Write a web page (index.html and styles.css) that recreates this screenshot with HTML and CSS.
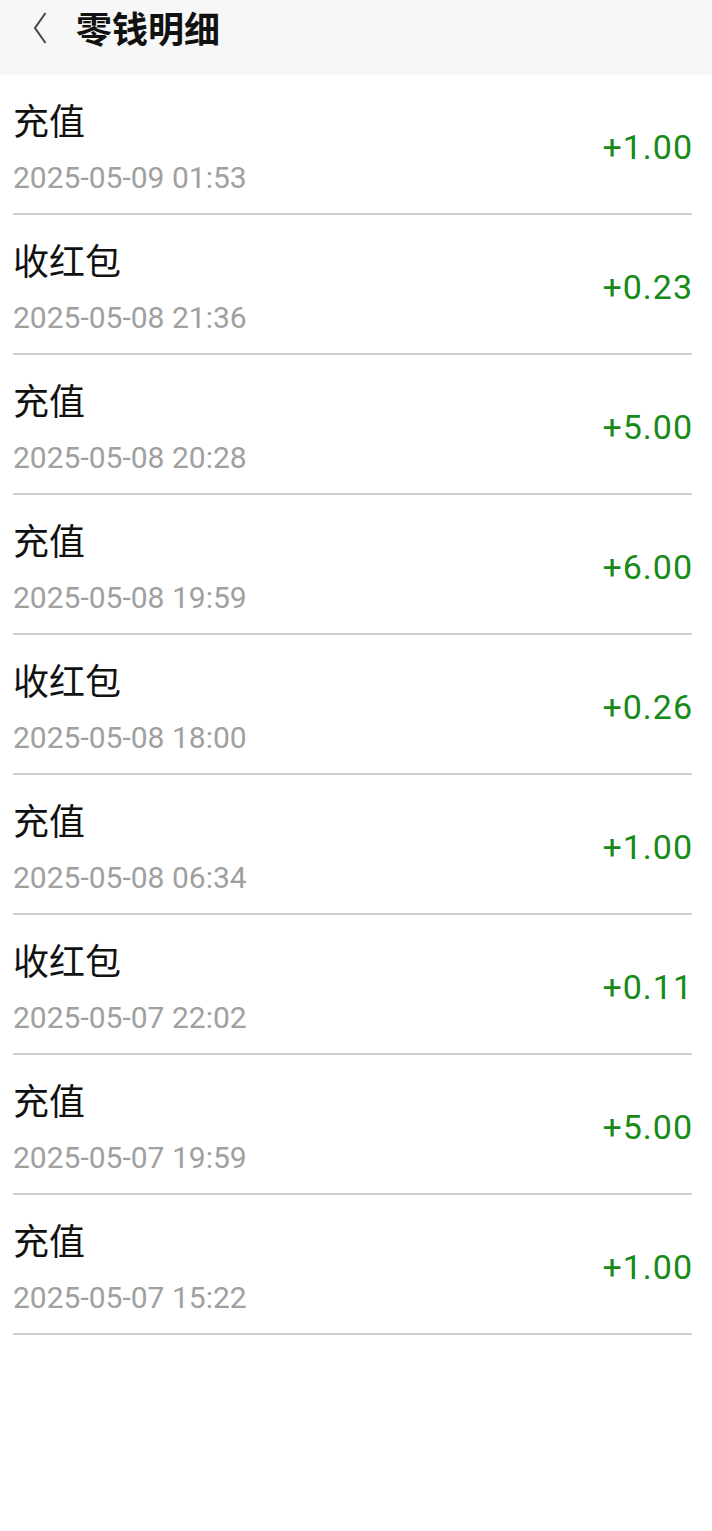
FILE: index.html
```html
<!DOCTYPE html>
<html>
<head>
	<meta charset="utf-8">
	<title>零钱明细</title>
	<link rel="stylesheet" href="styles.css">
</head>
<body>
	<div class="header">
		<div class="back">
			<svg width="14" height="32" viewBox="0 0 14 32">
				<polyline points="12.5,1 2,16 12.5,31" fill="none" stroke="#444" stroke-width="2"/>
			</svg>
		</div>
		<div class="title">零钱明细</div>
	</div>

	<div class="list">
		<div class="item">
			<div class="info">
				<div class="name">充值</div>
				<div class="time">2025-05-09 01:53</div>
			</div>
			<div class="amount">+1.00</div>
		</div>
		<div class="item">
			<div class="info">
				<div class="name">收红包</div>
				<div class="time">2025-05-08 21:36</div>
			</div>
			<div class="amount">+0.23</div>
		</div>
		<div class="item">
			<div class="info">
				<div class="name">充值</div>
				<div class="time">2025-05-08 20:28</div>
			</div>
			<div class="amount">+5.00</div>
		</div>
		<div class="item">
			<div class="info">
				<div class="name">充值</div>
				<div class="time">2025-05-08 19:59</div>
			</div>
			<div class="amount">+6.00</div>
		</div>
		<div class="item">
			<div class="info">
				<div class="name">收红包</div>
				<div class="time">2025-05-08 18:00</div>
			</div>
			<div class="amount">+0.26</div>
		</div>
		<div class="item">
			<div class="info">
				<div class="name">充值</div>
				<div class="time">2025-05-08 06:34</div>
			</div>
			<div class="amount">+1.00</div>
		</div>
		<div class="item">
			<div class="info">
				<div class="name">收红包</div>
				<div class="time">2025-05-07 22:02</div>
			</div>
			<div class="amount">+0.11</div>
		</div>
		<div class="item">
			<div class="info">
				<div class="name">充值</div>
				<div class="time">2025-05-07 19:59</div>
			</div>
			<div class="amount">+5.00</div>
		</div>
		<div class="item">
			<div class="info">
				<div class="name">充值</div>
				<div class="time">2025-05-07 15:22</div>
			</div>
			<div class="amount">+1.00</div>
		</div>
	</div>
</body>
</html>
```

FILE: styles.css
```css
* {
	margin: 0;
	padding: 0;
	box-sizing: border-box;
}
body {
	background: white;
	font-family: Roboto, "Noto Sans CJK SC", sans-serif;
	color: #111;
}

/* header */
div.header {
	height: 75px;
	background: #f7f7f7;
	display: flex;
	align-items: flex-start;
	padding: 12px 0 0 33px;
}
div.back {
	width: 43px;
	height: 32px;
}
div.back svg {
	display: block;
}
div.title {
	font-size: 36px;
	line-height: 36px;
	font-weight: bold;
	margin-top: 1px;
}

/* list */
div.list {
	padding: 0 20px 0 13px;
}
div.item {
	height: 140px;
	border-bottom: 2px solid #d0d0d0;
	display: flex;
	justify-content: space-between;
}
div.info {
	display: flex;
	flex-direction: column;
	padding-top: 26px;
}
div.name {
	font-size: 36px;
	line-height: 44px;
}
div.time {
	font-size: 30px;
	line-height: 38px;
	color: #a0a0a0;
	margin-top: 14px;
}
div.amount {
	align-self: center;
	font-size: 34px;
	letter-spacing: 1px;
	margin-right: -1px;
	color: #178a17;
	margin-top: 6px;
}
```
